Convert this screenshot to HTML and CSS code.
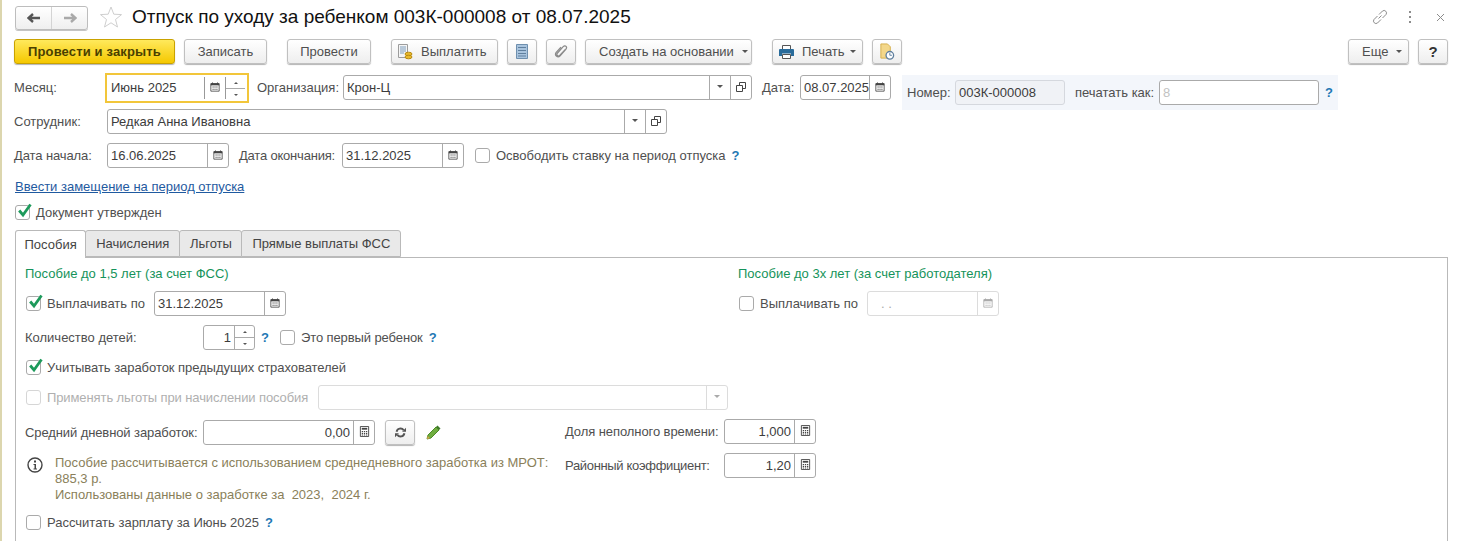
FILE: index.html
```html
<!DOCTYPE html>
<html lang="ru">
<head>
<meta charset="utf-8">
<title>Отпуск по уходу за ребенком</title>
<link rel="stylesheet" href="styles.css">
</head>
<body>
<svg class="defs" width="0" height="0" aria-hidden="true">
  <symbol id="cal" viewBox="0 0 12 12">
    <path d="M1 2h10v9H1z" fill="none" stroke="currentColor"/>
    <path d="M1 1.500h10V4H1z" fill="currentColor"/>
    <path d="M3 .5v2M9 .5v2" stroke="currentColor"/>
    <path d="M3 5.500h1.400v1.200H3zM5.300 5.500h1.400v1.200H5.300zM7.600 5.500H9v1.200H7.600zM3 8h1.400v1.200H3zM5.300 8h1.400v1.200H5.300zM7.600 8H9v1.200H7.600z" fill="currentColor"/>
  </symbol>
  <symbol id="calc" viewBox="0 0 12 12">
    <path d="M1.500 .5h9v11h-9z" fill="#fff" stroke="currentColor"/>
    <path d="M3 2h6v2H3z" fill="currentColor"/>
    <path d="M3 5.500h1.400v1.200H3zM5.300 5.500h1.400v1.200H5.300zM7.600 5.500H9v1.200H7.600zM3 7.500h1.400v1.200H3zM5.300 7.500h1.400v1.200H5.300zM7.600 7.500H9v1.200H7.600zM3 9.300h1.400v1H3zM5.300 9.300h1.400v1H5.300zM7.600 9.300H9v1H7.600z" fill="currentColor"/>
  </symbol>
  <symbol id="win" viewBox="0 0 10 10">
    <path d="M3.500 .5h6v6h-6z" fill="none" stroke="currentColor"/>
    <path d="M.5 3.500h6v6h-6z" fill="#fff" stroke="currentColor"/>
  </symbol>
  <symbol id="tick" viewBox="0 0 16 16">
    <path d="M3.200 7.500 7 12 14.500 1.500" fill="none" stroke="#1d9a5b" stroke-width="2.800"/>
  </symbol>
</svg>

<header class="title-row">
  <div class="nav">
    <span class="nav-btn"><svg width="14" height="10" viewBox="0 0 14 10"><path d="M1 5h12M6 1 1.500 5 6 9" fill="none" stroke="#555" stroke-width="2.400"/></svg></span>
    <span class="nav-btn nav-next"><svg width="14" height="10" viewBox="0 0 14 10"><path d="M1 5h12M8 1l4.500 4L8 9" fill="none" stroke="#a9a9a9" stroke-width="2.400"/></svg></span>
  </div>
  <svg class="star" width="24" height="24" viewBox="0 0 24 24"><path d="M12 2l2.800 7.200 7.700.4-6 4.900 2 7.500-6.500-4.200-6.500 4.200 2-7.500-6-4.900 7.700-.4z" fill="#fff" stroke="#cfcfcf"/></svg>
  <h1 class="title">Отпуск по уходу за ребенком 003К-000008 от 08.07.2025</h1>
  <div class="win-tools">
    <svg class="tool-link" width="16" height="16" viewBox="0 0 16 16"><path d="M6.500 9.500l3-3M5.500 7 2 10.500A2.500 2.500 0 0 0 5.500 14L9 10.500M7 5.500 10.500 2A2.500 2.500 0 0 1 14 5.500L10.500 9" fill="none" stroke="#8c8c8c"/></svg>
    <svg class="tool-dots" width="4" height="12" viewBox="0 0 4 12"><path d="M1 0h2v2H1zM1 5h2v2H1zM1 10h2v2H1z" fill="#8c8c8c"/></svg>
    <svg class="tool-close" width="9" height="9" viewBox="0 0 9 9"><path d="M1 1l7 7M8 1 1 8" stroke="#8c8c8c"/></svg>
  </div>
</header>

<div class="toolbar">
  <button class="btn btn-primary btn-close">Провести и закрыть</button>
  <button class="btn btn-save">Записать</button>
  <button class="btn btn-post">Провести</button>
  <button class="btn btn-pay">
    <svg width="16" height="17" viewBox="0 0 16 17"><path d="M1.500 1.500h9v13h-9z" fill="#f5f5f5" stroke="#9c9c9c"/><path d="M3 4h6M3 6h6M3 8h6M3 10h4" stroke="#7c9dbd"/><ellipse cx="11.500" cy="11" rx="3.500" ry="1.800" fill="#e8b92c" stroke="#b78a12"/><ellipse cx="11.500" cy="14" rx="3.500" ry="1.800" fill="#e8b92c" stroke="#b78a12"/></svg>
    Выплатить
  </button>
  <button class="btn btn-icon">
    <svg width="12" height="15" viewBox="0 0 12 15"><path d="M.5 .5h11v14H.5z" fill="#a9c4de" stroke="#6e8fae"/><path d="M2 3.500h8M2 6.500h8M2 9.500h8M2 12h8" stroke="#5f7f9e"/></svg>
  </button>
  <button class="btn btn-icon">
    <svg width="14" height="15" viewBox="0 0 16 17"><path d="M13 6 6.500 13c-1.600 1.800-4.300-.6-2.700-2.500L10.500 3c2.500-2.500 5.200.5 3 3L7 13.500c-2.800 3-7.200-1-4.500-4L8 3.500" fill="none" stroke="#8a8a8a" stroke-width="1.400"/></svg>
  </button>
  <button class="btn btn-create">Создать на основании<i class="caret"></i></button>
  <button class="btn btn-print">
    <svg width="15" height="14" viewBox="0 0 15 14"><path d="M3.500 .5h8v4h-8zM3.500 9.500h8v4h-8z" fill="#fff" stroke="#555"/><path d="M0 5a1 1 0 0 1 1-1h13a1 1 0 0 1 1 1v6h-3V8.500H3V11H0z" fill="#2a6c9b"/></svg>
    Печать<i class="caret"></i>
  </button>
  <button class="btn btn-icon btn-report">
    <svg width="16" height="17" viewBox="0 0 16 18"><path d="M1.500 1h7l3 3v12h-10z" fill="#f3d78a" stroke="#d4ae4b"/><circle cx="11" cy="13" r="4" fill="#fff" stroke="#5f7f9e" stroke-width="1.400"/><path d="M11 10.500V13h2.200" fill="none" stroke="#5f7f9e"/></svg>
  </button>
  <button class="btn btn-more">Еще<i class="caret"></i></button>
  <button class="btn btn-help">?</button>
</div>

<div class="row row-month">
  <span class="label label-month">Месяц:</span>
  <div class="field field-month">
    <span class="value">Июнь 2025</span>
    <span class="addon"><svg class="ico"><use href="#cal"/></svg></span>
    <span class="spin"><i class="up"></i><i class="down"></i></span>
  </div>
  <span class="label label-org">Организация:</span>
  <div class="field field-org">
    <span class="value">Крон-Ц</span>
    <span class="addon"><i class="caret"></i></span>
    <span class="addon"><svg class="ico-win"><use href="#win"/></svg></span>
  </div>
  <span class="label label-date">Дата:</span>
  <div class="field field-date">
    <span class="value">08.07.2025</span>
    <span class="addon"><svg class="ico"><use href="#cal"/></svg></span>
  </div>
  <div class="number-panel">
    <span class="label label-num">Номер:</span>
    <div class="field field-num field-read"><span class="value">003К-000008</span></div>
    <span class="label label-print">печатать как:</span>
    <div class="field field-printas"><span class="value value-faint">8</span></div>
    <span class="hint">?</span>
  </div>
</div>

<div class="row row-employee">
  <span class="label label-first">Сотрудник:</span>
  <div class="field field-emp">
    <span class="value">Редкая Анна Ивановна</span>
    <span class="addon"><i class="caret"></i></span>
    <span class="addon"><svg class="ico-win"><use href="#win"/></svg></span>
  </div>
</div>

<div class="row row-dates">
  <span class="label label-first label-tight">Дата начала:</span>
  <div class="field field-d"><span class="value">16.06.2025</span><span class="addon"><svg class="ico"><use href="#cal"/></svg></span></div>
  <span class="label label-end">Дата окончания:</span>
  <div class="field field-d"><span class="value">31.12.2025</span><span class="addon"><svg class="ico"><use href="#cal"/></svg></span></div>
  <label class="check check-free"><span class="box"></span>Освободить ставку на период отпуска</label>
  <span class="hint">?</span>
</div>

<div class="link-row"><a class="link" href="#">Ввести замещение на период отпуска</a></div>

<div class="approved-row">
  <label class="check"><span class="box"><svg class="tick"><use href="#tick"/></svg></span>Документ утвержден</label>
</div>

<nav class="tabs">
  <span class="tab tab-active">Пособия</span>
  <span class="tab">Начисления</span>
  <span class="tab tab-small">Льготы</span>
  <span class="tab">Прямые выплаты ФСС</span>
</nav>

<main class="panel">
  <div class="two-col">
    <section class="col-a">
      <h2 class="group">Пособие до 1,5 лет (за счет ФСС)</h2>
      <div class="prow prow-pay">
        <label class="check"><span class="box"><svg class="tick"><use href="#tick"/></svg></span>Выплачивать по</label>
        <div class="field field-pay"><span class="value">31.12.2025</span><span class="addon"><svg class="ico"><use href="#cal"/></svg></span></div>
      </div>
    </section>
    <section class="col-b">
      <h2 class="group">Пособие до 3х лет (за счет работодателя)</h2>
      <div class="prow prow-pay">
        <label class="check"><span class="box"></span>Выплачивать по</label>
        <div class="field field-pay3 field-disabled"><span class="value value-dots">.&nbsp;.</span><span class="addon"><svg class="ico"><use href="#cal"/></svg></span></div>
      </div>
    </section>
  </div>

  <div class="prow prow-kids">
    <span class="label label-kids">Количество детей:</span>
    <div class="field field-kids"><span class="value value-right">1</span><span class="spin"><i class="up"></i><i class="down"></i></span></div>
    <span class="hint hint-kids">?</span>
    <label class="check check-firstchild"><span class="box"></span>Это первый ребенок</label>
    <span class="hint">?</span>
  </div>

  <div class="prow prow-prev">
    <label class="check"><span class="box"><svg class="tick"><use href="#tick"/></svg></span>Учитывать заработок предыдущих страхователей</label>
  </div>

  <div class="prow prow-benefit">
    <label class="check check-disabled"><span class="box"></span>Применять льготы при начислении пособия</label>
    <div class="field field-benefit field-disabled"><span class="value"></span><span class="addon"><i class="caret"></i></span></div>
  </div>

  <div class="calc-block">
    <div class="calc-left">
      <div class="prow prow-avg">
        <span class="label label-avg">Средний дневной заработок:</span>
        <div class="field field-avg"><span class="value value-right">0,00</span><span class="addon"><svg class="ico ico-calc"><use href="#calc"/></svg></span></div>
        <button class="btn btn-icon btn-refresh">
          <svg width="11" height="11" viewBox="0 0 14 14"><path d="M2 6a5 5 0 0 1 9-2M12 8a5 5 0 0 1-9 2" fill="none" stroke="#555" stroke-width="2.400"/><path d="M9 6h5V1zM5 8H0v5z" fill="#555"/></svg>
        </button>
        <svg class="pencil" width="15" height="15" viewBox="0 0 15 15"><path d="M1 14l1-4 8-8 3 3-8 8z" fill="#6fae3f" stroke="#4f8a2a"/><path d="M10 2l1.500-1.500 3 3L13 5z" fill="#3f7a2a"/><path d="M1 14l.7-3 2.300 2.300z" fill="#d9a64a"/></svg>
      </div>
      <div class="note">
        <svg class="info" width="16" height="16" viewBox="0 0 16 16"><circle cx="8" cy="8" r="7" fill="none" stroke="#444" stroke-width="1.400"/><path d="M7 3.500h2v2H7zM6.500 7H9v4.500h1v1H6.500v-1h1V8h-1z" fill="#444"/></svg>
        <p class="note-text">Пособие рассчитывается с использованием среднедневного заработка из МРОТ:<br>885,3 р.<br>Использованы данные о заработке за&nbsp; 2023,&nbsp; 2024 г.</p>
      </div>
    </div>
    <div class="calc-right">
      <div class="prow prow-share">
        <span class="label label-share">Доля неполного времени:</span>
        <div class="field field-share"><span class="value value-right">1,000</span><span class="addon"><svg class="ico ico-calc"><use href="#calc"/></svg></span></div>
      </div>
      <div class="prow prow-share prow-share2">
        <span class="label label-share label-district">Районный коэффициент:</span>
        <div class="field field-share"><span class="value value-right">1,20</span><span class="addon"><svg class="ico ico-calc"><use href="#calc"/></svg></span></div>
      </div>
    </div>
  </div>

  <div class="prow prow-salary">
    <label class="check"><span class="box"></span>Рассчитать зарплату за Июнь 2025</label>
    <span class="hint">?</span>
  </div>
</main>
</body>
</html>
```
FILE: styles.css
```css
* { box-sizing: border-box; }
html, body { margin: 0; height: 541px; overflow: hidden; }
body {
  background: #fff;
  border-left: 2px solid #dcd6ae;
  padding: 0 11px 0 12px;
  font: 13px/15px "Liberation Sans", Arial, sans-serif;
  color: #4f4f4f;
}
.defs { position: absolute; }

/* Title */
.title-row { display: flex; align-items: center; height: 34px; padding: 0 0 0 1px; }
.nav { display: flex; flex: none; width: 73px; height: 24px; border: 1px solid #bdbdbd; border-radius: 3px; background: linear-gradient(#fff, #efefef); box-shadow: 0 1px 0 #c4c4c4; margin-top: 1px; }
.nav-btn { flex: 1; display: flex; align-items: center; justify-content: center; }
.nav-next { border-left: 1px solid #d4d4d4; }
.star { flex: none; margin-left: 11px; }
.title { margin: 0 0 0 9px; font-size: 19px; line-height: 24px; font-weight: 400; color: #111; white-space: nowrap; }
.win-tools { margin-left: auto; display: flex; align-items: center; padding-right: 3px; }
.tool-dots { margin-left: 20px; }
.tool-close { margin-left: 24px; }

/* Toolbar */
.toolbar { display: flex; align-items: flex-start; height: 38px; padding-top: 5px; }
.btn {
  display: inline-flex; flex: none; align-items: center; justify-content: center; gap: 6px;
  height: 25px; padding: 0; font: inherit; color: #4f4f4f;
  border: 1px solid #c0c0c0; border-radius: 3px;
  background: linear-gradient(#fff, #eeeeee);
  box-shadow: 0 1px 1px #b4b4b4;
}
.btn-primary { background: linear-gradient(#ffe95c, #f5c800); border-color: #c9a200; color: #4a3f00; font-weight: 700; letter-spacing: .15px; }
.btn-close { width: 161px; }
.btn-save { width: 83px; margin-left: 9px; }
.btn-post { width: 84px; margin-left: 20px; }
.btn-pay { width: 107px; margin-left: 20px; justify-content: flex-start; padding-left: 5px; gap: 8px; }
.btn-icon { width: 30px; margin-left: 9px; }
.btn-create { width: 167px; margin-left: 9px; justify-content: flex-start; padding-left: 13px; gap: 0; }
.btn-create .caret, .btn-print .caret, .btn-more .caret { margin-left: 8px; }
.btn-print { width: 91px; margin-left: 20px; justify-content: flex-start; padding-left: 6px; gap: 8px; }
.btn-print .caret { margin-left: -3px; }
.btn-report { margin-left: 9px; }
.btn-more { width: 61px; margin-left: auto; justify-content: flex-start; padding-left: 13px; gap: 0; }
.btn-help { width: 30px; margin-left: 9px; font-size: 15px; font-weight: 700; color: #333; }
.caret { display: inline-block; flex: none; width: 0; height: 0; margin-left: 5px; border: 3px solid transparent; border-top-color: #555; border-bottom: 0; }

/* Rows and labels */
.row { display: flex; align-items: center; }
.label { flex: none; white-space: nowrap; }
.label-first { width: 93px; }
.label-month { width: 91px; }
.label-tight { letter-spacing: -.1px; }
.row-month { height: 37px; align-items: flex-start; }
.row-month > .label { margin-top: 8px; }
.row-employee { height: 34px; align-items: flex-start; }
.row-employee .label { margin-top: 5px; }
.row-dates { height: 25px; margin-bottom: 5px; }

/* Fields */
.field { flex: none; display: flex; height: 25px; border: 1px solid #aaa; border-radius: 3px; background: #fff; color: #3c3c3c; }
.value { flex: 1; min-width: 0; padding: 0 2px 0 3px; line-height: 23px; white-space: nowrap; overflow: hidden; }
.value-right { text-align: right; padding-right: 3px; }
.value-faint { color: #c2c2c2; }
.value-dots { color: #aaa; padding-left: 13px; }
.addon { flex: none; width: 21px; display: flex; align-items: center; justify-content: center; border-left: 1px solid #aaa; color: #444; }
.addon .caret { margin: 0 0 2px; }
.ico { width: 10px; height: 10px; margin-bottom: 2px; }
.ico-calc { width: 11px; height: 11px; }
.ico-win { width: 10px; height: 10px; margin-bottom: 2px; color: #444; }
.spin { flex: none; width: 20px; display: flex; flex-direction: column; border-left: 1px solid #aaa; }
.spin i { flex: 1; position: relative; }
.spin .up { border-bottom: 1px solid #aaa; }
.spin i::after { content: ""; position: absolute; left: 8px; top: 5px; border: 2px solid transparent; }
.spin .up::after { border-bottom-color: #555; border-top: 0; }
.spin .down::after { border-top-color: #555; border-bottom: 0; }

.field-month { width: 144px; height: 30px; margin-top: 1px; border: 2px solid #f2c63a; border-radius: 0; }
.field-month .value { line-height: 26px; padding-left: 4px; }
.field-month .addon { margin: 2px 0; border-color: #999; }
.field-month .spin { margin: 2px 2px 2px 0; border-color: #999; }
.label-org { margin: 8px 0 0 8px; width: 86px; }
.field-org { width: 409px; margin-top: 3px; }
.label-date { margin: 8px 0 0 10px; width: 38px; }
.field-date { width: 91px; margin-top: 3px; }
.number-panel { display: flex; align-items: center; flex: none; width: 436px; height: 35px; margin: 3px 0 0 11px; padding-left: 5px; background: #f3f6fb; }
.label-num { width: 48px; }
.field-num { width: 110px; }
.field-read { background: #f0f2f6; border-color: #d5d8de; }
.label-print { margin-left: 10px; width: 84px; }
.field-printas { width: 160px; }
.number-panel .hint { margin-left: 6px; }
.hint { color: #1f78b4; font-weight: 700; flex: none; }

.field-emp { width: 560px; }
.field-d { width: 122px; }
.label-end { margin-left: 10px; width: 103px; letter-spacing: -.2px; }

/* Checks */
.check { display: inline-flex; align-items: center; flex: none; white-space: nowrap; }
.box { position: relative; flex: none; width: 15px; height: 15px; margin-right: 6px; border: 1px solid #aaa; border-radius: 3px; background: #fff; }
.tick { position: absolute; left: 0; top: -3px; width: 16px; height: 16px; }
.check-free { margin-left: 11px; }
.check-free + .hint { margin-left: 6px; }
.check-disabled { color: #b0b0b0; letter-spacing: -.1px; }
.check-disabled .box { border-color: #d6d6d6; }

.link-row { height: 25px; padding: 6px 0 0 1px; }
.link { color: #1f5aa0; }
.approved-row { height: 32px; padding: 7px 0 0 1px; }

/* Tabs */
.tabs { display: flex; height: 28px; padding-left: 1px; position: relative; z-index: 1; }
.tab { display: flex; align-items: center; padding: 0 10px; margin-right: -1px; height: 27px; background: #e9e9e9; border: 1px solid #b9b9b9; border-radius: 3px 3px 0 0; color: #444; }
.tab-active { height: 28px; background: #fff; border-bottom: 0; padding: 0 8.5px; }
.tab-small { padding: 0 9.5px; }

/* Panel */
.panel { margin: -1px 0 0 1px; height: 320px; border: 1px solid #b9b9b9; padding: 8px 0 0 9px; }
.two-col { display: flex; }
.col-a { width: 713px; }
.group { margin: 0; font-size: 13px; line-height: 15px; font-weight: 400; color: #15935a; }
.prow { display: flex; align-items: center; }
.prow-pay { margin-top: 10px; height: 25px; padding-left: 1px; }
.field-pay, .field-pay3 { width: 132px; margin-left: 9px; }
.field-disabled { border-color: #dcdcdc; }
.field-disabled .addon { border-color: #dcdcdc; color: #aaa; }
.field-disabled .caret { border-top-color: #aaa; }
.prow-kids { margin-top: 9px; height: 25px; }
.label-kids { width: 178px; }
.field-kids { width: 52px; }
.hint-kids { margin-left: 6px; }
.check-firstchild { margin-left: 11px; letter-spacing: -.1px; }
.check-firstchild + .hint { margin-left: 6px; }
.prow-prev { margin-top: 9px; height: 16px; padding-left: 1px; letter-spacing: -.05px; }
.prow-benefit { margin-top: 10px; height: 25px; padding-left: 1px; }
.field-benefit { width: 410px; margin-left: 10px; }

.calc-block { display: flex; margin-top: 9px; }
.calc-left { flex: none; width: 540px; }
.prow-avg { height: 26px; }
.label-avg { width: 178px; letter-spacing: -.1px; }
.field-avg { width: 172px; }
.btn-refresh { margin-left: 10px; }
.pencil { margin-left: 11px; }
.note { display: flex; margin-top: 10px; padding-left: 2px; }
.info { flex: none; margin-top: 2px; }
.note-text { margin: 0 0 0 12px; line-height: 16px; color: #8a7f5a; white-space: nowrap; }
.prow-share { height: 25px; }
.prow-share2 { margin-top: 9px; }
.label-share { width: 159px; letter-spacing: -.08px; }
.label-district { letter-spacing: -.33px; }
.field-share { width: 92px; }
.prow-salary { margin-top: 11px; height: 16px; padding-left: 1px; }
.prow-salary .hint { margin-left: 6px; }
```
